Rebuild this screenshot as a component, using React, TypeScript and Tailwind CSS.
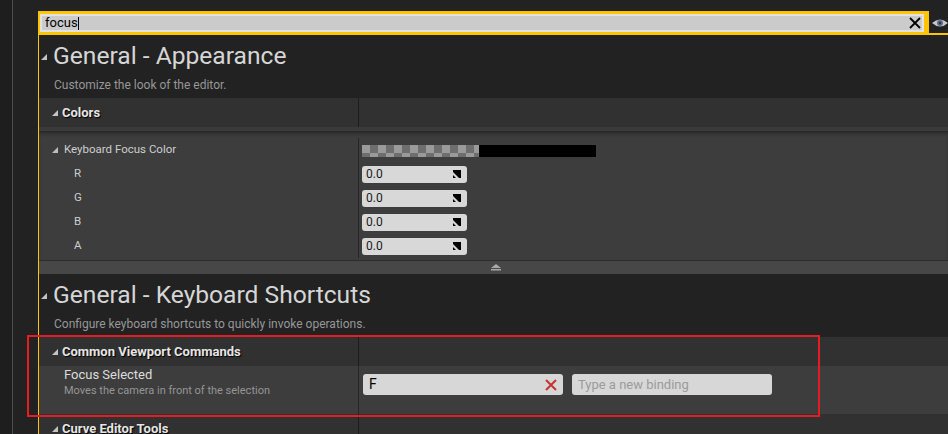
import type { ReactNode } from 'react';

const CHANNELS = ['R', 'G', 'B', 'A'];

function Tri({ size = 6, className = '' }: { size?: number; className?: string }) {
  return (
    <svg width={size} height={size} viewBox="0 0 6 6" className={className}>
      <polygon points="6,0 6,6 0,6" fill="currentColor" />
    </svg>
  );
}

function SectionHeader({ title, desc }: { title: string; desc: string }) {
  return (
    <div className="pt-[7px] pb-[6px]">
      <div className="h-[28px] flex items-center">
        <Tri size={6} className="ml-[2px] mt-[2px] text-[#c4c4c4] shrink-0" />
        <span className="ml-[6px] text-[24.6px] leading-[28px] text-[#d6d6d6]">{title}</span>
      </div>
      <div className="mt-[8px] h-[14px] leading-[14px] pl-[15px] text-[12px] text-[#979797]">{desc}</div>
    </div>
  );
}

function Category({ label }: { label: string }) {
  return (
    <div className="flex h-[29px] bg-[#313131] shrink-0">
      <div className="w-[319px] flex items-center pl-[13px]">
        <Tri size={6} className="text-[#c4c4c4] shrink-0" />
        <span className="ml-[4px] text-[13px] font-bold text-[#e6e6e6] [text-shadow:1px_1px_1px_#000]">
          {label}
        </span>
      </div>
      <div className="flex-1 border-l border-[#1c1c1c]" />
    </div>
  );
}

function PropRow({ left, children }: { left: ReactNode; children: ReactNode }) {
  return (
    <div className="flex h-[24px]">
      <div className="w-[319px] flex items-center">{left}</div>
      <div className="flex-1 border-l border-[#262626] flex items-center pl-[3px]">{children}</div>
    </div>
  );
}

function SpinIcon() {
  return (
    <svg width="8" height="8" viewBox="0 0 8 8">
      <polygon points="0,0 8,0 8,8 6,8 0,2" fill="#000" />
      <polygon points="0,5 0,8 3,8" fill="#000" />
    </svg>
  );
}

export default function App() {
  return (
    <div className="w-[948px] h-[434px] overflow-hidden relative flex bg-[#222222] font-['Roboto','Noto_Sans',sans-serif]">
      <div className="w-[12px] bg-[#1e1e1e] shrink-0" />
      <div className="w-px bg-[#4e4e4e] shrink-0" />
      <div className="w-[25px] bg-[#222222] shrink-0" />

      <div className="flex-1 flex flex-col min-w-0">
        <div className="h-[11px] shrink-0" />
        {/* search bar */}
        <div className="flex h-[24px] shrink-0">
          <div className="w-[895px] bg-[#ffc400] pl-[2px] pr-[5px] pt-[3px] pb-[3px]">
            <div className="h-full border-2 border-[#e2e2e2] bg-[#cbcbcb] flex items-center pl-[3px] pr-[1px]">
              <span className="text-[13px] leading-[14px] text-black">focus</span>
              <span className="w-px h-[13px] bg-black" />
              <svg width="12" height="12" viewBox="0 0 12 12" className="ml-auto">
                <path d="M1 1 L11 11 M11 1 L1 11" stroke="#000" strokeWidth="1.8" fill="none" />
              </svg>
            </div>
          </div>
          <div className="flex-1 flex flex-col border-b-2 border-[#ffc400]">
            <svg width="16" height="10" viewBox="0 0 16 10" className="mt-[7px] ml-[3px]">
              <path d="M0 5 Q8 -2 16 5 Q8 12 0 5 Z" fill="#c8c8c8" />
              <circle cx="8" cy="5" r="3" fill="#5a6a8a" />
              <circle cx="8" cy="5" r="1.2" fill="#2a3550" />
            </svg>
          </div>
        </div>

        {/* details panel */}
        <div className="flex-1 flex flex-col border-l border-[#ffc400] bg-[#222222]">
          <SectionHeader title="General - Appearance" desc="Customize the look of the editor." />
          <Category label="Colors" />
          <div className="h-[4px] bg-[#3a3a3a] shrink-0" />
          <div className="bg-[#3d3d3d] pt-[7px] pb-[2px] shadow-[inset_0_4px_4px_-2px_rgba(0,0,0,0.4)] shrink-0">
            <PropRow
              left={
                <div className="flex items-center pl-[13px]">
                  <Tri size={6} className="text-[#bdbdbd] shrink-0" />
                  <span className="ml-[6px] text-[11.5px] text-[#cdcdcd]">Keyboard Focus Color</span>
                </div>
              }
            >
              <div className="w-[117px] h-[12px] bg-[repeating-conic-gradient(#6e6e6e_0_25%,#9a9a9a_0_50%)] bg-[length:16px_16px] mt-[1px]" />
              <div className="w-[117px] h-[12px] bg-black mt-[1px]" />
            </PropRow>
            {CHANNELS.map(ch => (
              <PropRow key={ch} left={<span className="pl-[35px] text-[11.5px] text-[#cdcdcd]">{ch}</span>}>
                <div className="w-[105px] h-[17px] rounded-[3px] bg-[#d8d8d8] flex items-center justify-between pl-[4px] pr-[6px]">
                  <span className="text-[12px] text-[#1a1a1a]">0.0</span>
                  <SpinIcon />
                </div>
              </PropRow>
            ))}
          </div>
          <div className="h-px bg-[#2c2c2c] shrink-0" />
          <div className="h-[13px] bg-[#474747] flex justify-center items-center shrink-0">
            <svg width="10" height="7" viewBox="0 0 10 7" className="ml-[5px]">
              <polygon points="0,4 10,4 5,0" fill="#a8a8a8" />
              <rect x="0" y="5" width="10" height="1.5" fill="#a8a8a8" />
            </svg>
          </div>

          <SectionHeader
            title="General - Keyboard Shortcuts"
            desc="Configure keyboard shortcuts to quickly invoke operations."
          />
          <Category label="Common Viewport Commands" />
          <div className="flex h-[48px] bg-[#3d3d3d] shrink-0">
            <div className="w-[319px] flex flex-col pl-[25px] pt-[2px]">
              <span className="text-[13px] leading-[14px] text-[#dcdcdc]">Focus Selected</span>
              <span className="mt-[2px] text-[11px] leading-[14px] text-[#959595]">
                Moves the camera in front of the selection
              </span>
            </div>
            <div className="flex-1 border-l border-[#262626] pl-[4px] pt-[8px] flex gap-[9px]">
              <div className="w-[200px] h-[21px] rounded-[3px] bg-[#d7d7d7] flex items-center pl-[6px] pr-[6px]">
                <span className="text-[14px] text-black">F</span>
                <svg width="12" height="12" viewBox="0 0 12 12" className="ml-auto">
                  <path d="M1 1 L11 11 M11 1 L1 11" stroke="#c83232" strokeWidth="2" fill="none" />
                </svg>
              </div>
              <div className="w-[200px] h-[21px] rounded-[3px] bg-[#d7d7d7] flex items-center pl-[6px]">
                <span className="text-[13px] text-[#9b9b9b]">Type a new binding</span>
              </div>
            </div>
          </div>
          <Category label="Curve Editor Tools" />
        </div>
      </div>

      {/* annotation box */}
      <div className="absolute left-[27px] top-[335px] w-[793px] h-[82px] border-2 border-[#e51c23] pointer-events-none" />
    </div>
  );
}
